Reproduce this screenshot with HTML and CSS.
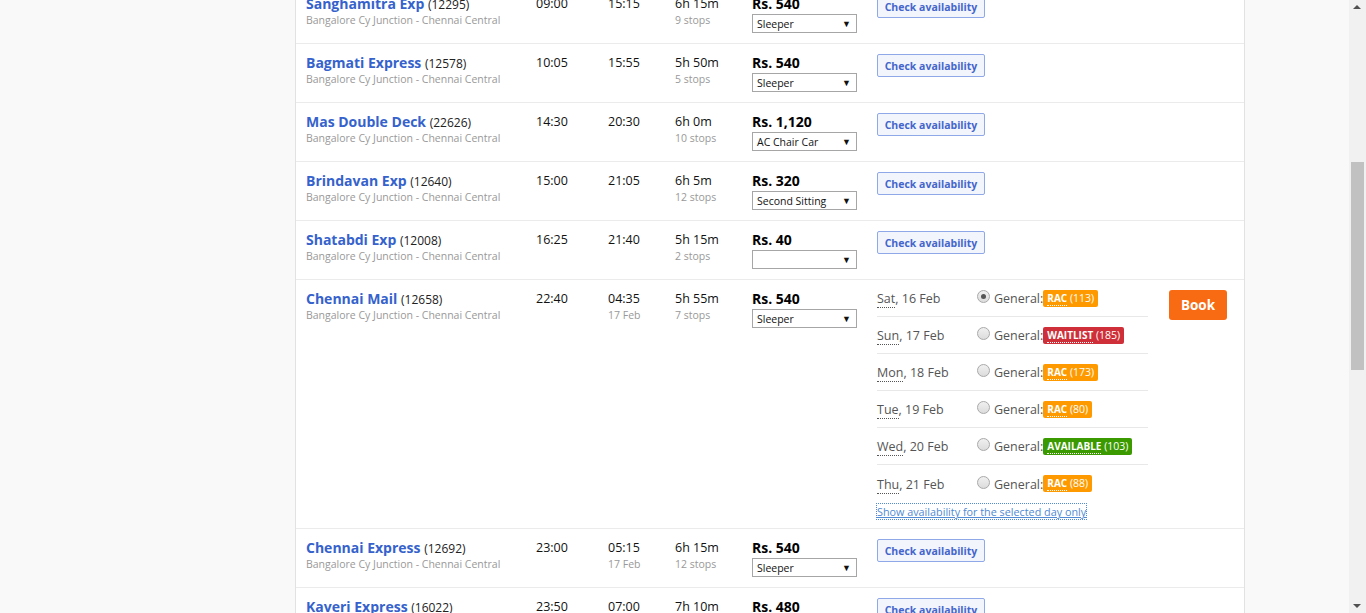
FILE: index.html
```html
<!DOCTYPE html>
<html>
<head>
<meta charset="utf-8">
<link rel="stylesheet" href="styles.css">
</head>
<body>
<div class="page">
  <div class="results">
    <div class="list">
      <div class="row">
        <div class="c-name"><div class="name"><a>Sanghamitra Exp</a> <span class="num">(12295)</span></div><div class="sub route">Bangalore Cy Junction - Chennai Central</div></div>
        <div class="c-dep"><div class="t">09:00</div></div>
        <div class="c-arr"><div class="t">15:15</div></div>
        <div class="c-dur"><div class="t">6h 15m</div><div class="sub">9 stops</div></div>
        <div class="c-price"><div class="price">Rs. 540</div><div class="sel"><span>Sleeper</span><i>▼</i></div></div>
        <div class="c-av"><button class="check">Check availability</button></div>
      </div>
      <div class="row">
        <div class="c-name"><div class="name"><a>Bagmati Express</a> <span class="num">(12578)</span></div><div class="sub route">Bangalore Cy Junction - Chennai Central</div></div>
        <div class="c-dep"><div class="t">10:05</div></div>
        <div class="c-arr"><div class="t">15:55</div></div>
        <div class="c-dur"><div class="t">5h 50m</div><div class="sub">5 stops</div></div>
        <div class="c-price"><div class="price">Rs. 540</div><div class="sel"><span>Sleeper</span><i>▼</i></div></div>
        <div class="c-av"><button class="check">Check availability</button></div>
      </div>
      <div class="row">
        <div class="c-name"><div class="name"><a>Mas Double Deck</a> <span class="num">(22626)</span></div><div class="sub route">Bangalore Cy Junction - Chennai Central</div></div>
        <div class="c-dep"><div class="t">14:30</div></div>
        <div class="c-arr"><div class="t">20:30</div></div>
        <div class="c-dur"><div class="t">6h 0m</div><div class="sub">10 stops</div></div>
        <div class="c-price"><div class="price">Rs. 1,120</div><div class="sel"><span>AC Chair Car</span><i>▼</i></div></div>
        <div class="c-av"><button class="check">Check availability</button></div>
      </div>
      <div class="row">
        <div class="c-name"><div class="name"><a>Brindavan Exp</a> <span class="num">(12640)</span></div><div class="sub route">Bangalore Cy Junction - Chennai Central</div></div>
        <div class="c-dep"><div class="t">15:00</div></div>
        <div class="c-arr"><div class="t">21:05</div></div>
        <div class="c-dur"><div class="t">6h 5m</div><div class="sub">12 stops</div></div>
        <div class="c-price"><div class="price">Rs. 320</div><div class="sel"><span>Second Sitting</span><i>▼</i></div></div>
        <div class="c-av"><button class="check">Check availability</button></div>
      </div>
      <div class="row">
        <div class="c-name"><div class="name"><a>Shatabdi Exp</a> <span class="num">(12008)</span></div><div class="sub route">Bangalore Cy Junction - Chennai Central</div></div>
        <div class="c-dep"><div class="t">16:25</div></div>
        <div class="c-arr"><div class="t">21:40</div></div>
        <div class="c-dur"><div class="t">5h 15m</div><div class="sub">2 stops</div></div>
        <div class="c-price"><div class="price">Rs. 40</div><div class="sel"><span></span><i>▼</i></div></div>
        <div class="c-av"><button class="check">Check availability</button></div>
      </div>
      <div class="row open">
        <div class="c-name"><div class="name"><a>Chennai Mail</a> <span class="num">(12658)</span></div><div class="sub route">Bangalore Cy Junction - Chennai Central</div></div>
        <div class="c-dep"><div class="t">22:40</div></div>
        <div class="c-arr"><div class="t">04:35</div><div class="sub">17 Feb</div></div>
        <div class="c-dur"><div class="t">5h 55m</div><div class="sub">7 stops</div></div>
        <div class="c-price"><div class="price">Rs. 540</div><div class="sel"><span>Sleeper</span><i>▼</i></div></div>
        <div class="c-av expanded">
          <div class="days">
            <div class="day"><span class="date"><abbr>Sat</abbr>, 16 Feb</span><span class="radio on"></span><span class="quota">General:</span><span class="badge rac"><b>RAC</b> (113)</span></div>
            <div class="day"><span class="date"><abbr>Sun</abbr>, 17 Feb</span><span class="radio"></span><span class="quota">General:</span><span class="badge wl"><b>WAITLIST</b> (185)</span></div>
            <div class="day"><span class="date"><abbr>Mon</abbr>, 18 Feb</span><span class="radio"></span><span class="quota">General:</span><span class="badge rac"><b>RAC</b> (173)</span></div>
            <div class="day"><span class="date"><abbr>Tue</abbr>, 19 Feb</span><span class="radio"></span><span class="quota">General:</span><span class="badge rac"><b>RAC</b> (80)</span></div>
            <div class="day"><span class="date"><abbr>Wed</abbr>, 20 Feb</span><span class="radio"></span><span class="quota">General:</span><span class="badge av"><b>AVAILABLE</b> (103)</span></div>
            <div class="day last"><span class="date"><abbr>Thu</abbr>, 21 Feb</span><span class="radio"></span><span class="quota">General:</span><span class="badge rac"><b>RAC</b> (88)</span></div>
            <a class="only">Show availability for the selected day only</a>
          </div>
          <button class="book">Book</button>
        </div>
      </div>
      <div class="row">
        <div class="c-name"><div class="name"><a>Chennai Express</a> <span class="num">(12692)</span></div><div class="sub route">Bangalore Cy Junction - Chennai Central</div></div>
        <div class="c-dep"><div class="t">23:00</div></div>
        <div class="c-arr"><div class="t">05:15</div><div class="sub">17 Feb</div></div>
        <div class="c-dur"><div class="t">6h 15m</div><div class="sub">12 stops</div></div>
        <div class="c-price"><div class="price">Rs. 540</div><div class="sel"><span>Sleeper</span><i>▼</i></div></div>
        <div class="c-av"><button class="check">Check availability</button></div>
      </div>
      <div class="row">
        <div class="c-name"><div class="name"><a>Kaveri Express</a> <span class="num">(16022)</span></div><div class="sub route">Bangalore Cy Junction - Chennai Central</div></div>
        <div class="c-dep"><div class="t">23:50</div></div>
        <div class="c-arr"><div class="t">07:00</div></div>
        <div class="c-dur"><div class="t">7h 10m</div><div class="sub">11 stops</div></div>
        <div class="c-price"><div class="price">Rs. 480</div><div class="sel"><span>Sleeper</span><i>▼</i></div></div>
        <div class="c-av"><button class="check">Check availability</button></div>
      </div>
    </div>
  </div>
</div>
<div class="scrollbar"><div class="arrow up"></div><div class="thumb"></div><div class="arrow down"></div></div>
</body>
</html>
```
FILE: styles.css
```css
html, body { margin: 0; padding: 0; height: 100%; overflow: hidden; }
body {
  background: #f9f9f9;
  font-family: "Open Sans", "Noto Sans", sans-serif;
  color: #222;
}
.page { display: flex; width: 1349px; height: 613px; overflow: hidden; }
.results {
  margin-left: 295px;
  width: 948px;
  background: #fff;
  border-left: 1px solid #e2e2e2;
  border-right: 1px solid #e2e2e2;
}
.list { margin-top: -15px; }
.row {
  display: grid;
  grid-template-columns: 230px 72px 67px 77px 125px 1fr;
  padding: 10px 0 0 10px;
  box-sizing: border-box;
  height: 59px;
  border-bottom: 1px solid #ebebeb;
}
.row.open { height: 249px; }
.name { font-size: 14px; line-height: 18px; white-space: nowrap; }
.name a { color: #3562cc; font-weight: 700; font-size: 14px; }
.num { font-size: 12px; color: #222; }
.sub { font-size: 10.5px; line-height: 14px; color: #999; white-space: nowrap; }
.route { margin-top: -1px; }
.t { font-size: 12.5px; line-height: 18px; color: #111; }
.price { font-size: 14px; font-weight: 700; line-height: 18px; color: #000; }
.sel {
  margin-top: 1px;
  width: 105px; height: 19px;
  box-sizing: border-box;
  border: 1px solid #a6a6a6;
  display: flex; align-items: center; justify-content: space-between;
  padding: 0 5px 0 4px;
  font-size: 10.5px; color: #111;
}
.sel i { font-style: normal; font-size: 9px; color: #111; }
.check {
  display: block;
  width: 108px; height: 23px;
  margin: 0; padding: 0;
  background: #f3f5fc;
  border: 1px solid #8ea8e8;
  border-radius: 2px;
  color: #4466cc;
  font-family: inherit;
  font-weight: 700;
  font-size: 10.5px;
}
.expanded { display: flex; align-items: flex-start; margin-top: -10px; }
.days { width: 271px; display: flex; flex-direction: column; }
.day {
  display: flex; align-items: center;
  height: 37px;
  box-sizing: border-box;
  padding-top: 1px;
  border-bottom: 1px solid #e8e8e8;
  font-size: 12.5px; color: #555;
}
.day.last { border-bottom: 0; }
.date { width: 100px; }
.date abbr { text-decoration: none; border-bottom: 1px dotted #555; }
.radio {
  width: 11px; height: 11px; border-radius: 50%;
  border: 1px solid #a9a9a9;
  background: linear-gradient(#f0f0f0, #dcdcdc);
  margin: -4px 4px 0 0;
  position: relative;
}
.radio.on::after {
  content: ""; position: absolute; left: 3px; top: 3px;
  width: 5px; height: 5px; border-radius: 50%; background: #555;
}
.badge {
  color: #fff; font-size: 10.5px;
  height: 17px; line-height: 17px;
  padding: 0 4px;
  border-radius: 2px;
  margin-top: -1px;
}
.badge b { font-size: 10px; border-bottom: 1px dotted #fff; }
.badge.rac { background: #fe9a00; }
.badge.wl { background: #cf2f38; }
.badge.av { background: #3a9a00; }
.only {
  margin-top: 2px;
  align-self: flex-start;
  font-size: 10.8px; color: #4f8ad3; text-decoration: underline;
  outline: 1px dotted #4f8ad3;
}
.book {
  margin: 10px 0 0 21px;
  width: 58px; height: 30px;
  background: #f96b12;
  color: #fff; font-weight: 700; font-size: 13.5px;
  border: 0; border-radius: 3px;
  font-family: inherit;
}
.scrollbar {
  position: fixed; right: 0; top: 0;
  width: 17px; height: 613px;
  background: #f1f1f1;
}
.thumb {
  position: absolute; left: 2px; top: 162px;
  width: 13px; height: 208px; background: #c1c1c1;
}
.arrow { position: absolute; left: 4px; width: 0; height: 0; border-left: 4px solid transparent; border-right: 4px solid transparent; }
.arrow.up { top: 5px; border-bottom: 4px solid #505050; }
.arrow.down { bottom: 5px; border-top: 4px solid #505050; }
```
